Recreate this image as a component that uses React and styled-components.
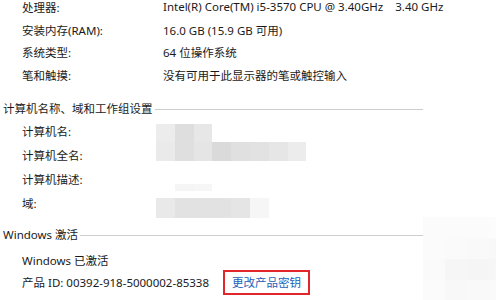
import React from 'react'
import styled, { createGlobalStyle } from 'styled-components'

const GlobalStyle = createGlobalStyle`
  html, body {
    margin: 0;
    padding: 0;
    background: #fff;
  }
  body {
    font-family: "Noto Sans", "Noto Sans CJK SC", sans-serif;
    font-size: 11.5px;
    color: #1a1a1a;
  }
`

const Page = styled.div`
  width: 496px;
  height: 300px;
  overflow: hidden;
  position: relative;
  background: #fff;
`

const Section = styled.div`
  display: flex;
  flex-direction: column;
  margin-top: ${p => p.top || 0}px;
`

const Header = styled.div`
  display: flex;
  align-items: center;
  height: 22px;
  width: 423px;
  padding-left: 3px;
  box-sizing: border-box;
  white-space: nowrap;

  &::after {
    content: '';
    flex: 1;
    height: 1px;
    margin: 2px 0 0 2px;
    background: #cdcdcd;
  }
`

const Row = styled.div`
  display: flex;
  align-items: center;
  height: ${p => p.h}px;
  padding-left: 22px;
  white-space: nowrap;
`

const Label = styled.div`
  width: 141px;
  flex-shrink: 0;
`

const Value = styled.div`
  position: relative;
  display: flex;
  align-items: center;
  align-self: stretch;
  flex: 1;
`

const Gap = styled.span`
  display: inline-block;
  width: ${p => p.w}px;
`

const Mosaic = styled.div`
  position: absolute;
  left: -7px;
  top: ${p => p.top}px;
  display: flex;
`

const Cell = styled.div`
  width: 18.8px;
  height: ${p => p.h}px;
  background: ${p => p.c};
`

const KeyLink = styled.a`
  margin-left: 14px;
  padding: 1px 7px;
  border: 2px solid #e2252b;
  color: #1a5fb8;
  text-decoration: none;
  line-height: 19px;
  cursor: pointer;
`

const Corner = styled.div`
  position: absolute;
  left: 423px;
  top: 217px;
  display: grid;
  grid-template-columns: repeat(4, 22px);
  grid-auto-rows: 21px;
`

const CornerCell = styled.div`
  background: ${p => p.c};
`

const shades = (list, h) => list.map((c, i) => <Cell key={i} h={h} c={c} />)

const cornerShades = [
  '#fbfbfb', '#fbfbfb', '#fbfbfb', '#fcfcfc',
  '#fbfbfb', '#fafafa', '#f9f9f9', '#f8f8f8',
  '#fafafa', '#f6f6f6', '#f5f5f5', '#f6f6f6',
  '#fbfbfb', '#f8f8f8', '#f9f9f9', '#fafafa'
]

const App = () => (
  <Page>
    <GlobalStyle />
    <Section top={-4.5}>
      <Row h={22.7}>
        <Label>处理器:</Label>
        <Value>
          Intel(R) Core(TM) i5-3570 CPU @ 3.40GHz<Gap w={12} />3.40 GHz
        </Value>
      </Row>
      <Row h={22.7}>
        <Label>安装内存(RAM):</Label>
        <Value>16.0 GB (15.9 GB 可用)</Value>
      </Row>
      <Row h={22.7}>
        <Label>系统类型:</Label>
        <Value>64 位操作系统</Value>
      </Row>
      <Row h={22.7}>
        <Label>笔和触摸:</Label>
        <Value>没有可用于此显示器的笔或触控输入</Value>
      </Row>
    </Section>

    <Section top={11}>
      <Header>计算机名称、域和工作组设置</Header>
      <Row h={24}>
        <Label>计算机名:</Label>
        <Value>
          <Mosaic top={5}>{shades(['#ececec', '#dedede', '#e7e7e7'], 18)}</Mosaic>
        </Value>
      </Row>
      <Row h={24}>
        <Label>计算机全名:</Label>
        <Value>
          <Mosaic top={-1}>
            {shades(['#eaeaea', '#dfdfdf', '#e5e5e5', '#dadada', '#e0e0e0', '#e2e2e2', '#e6e6e6', '#ececec'], 19)}
          </Mosaic>
        </Value>
      </Row>
      <Row h={24}>
        <Label>计算机描述:</Label>
        <Value>
          <Mosaic top={17}>{shades(['#ffffff', '#f5f5f5', '#f6f6f6'], 7)}</Mosaic>
        </Value>
      </Row>
      <Row h={24}>
        <Label>域:</Label>
        <Value>
          <Mosaic top={7}>
            {shades(['#e9e9e9', '#e2e2e2', '#e2e2e2', '#e2e2e2', '#e5e5e5', '#f6f6f6'], 20)}
          </Mosaic>
        </Value>
      </Row>
    </Section>

    <Section top={8}>
      <Header>Windows 激活</Header>
      <Section top={4}>
        <Row h={22}>
          <Label>Windows 已激活</Label>
        </Row>
        <Row h={22}>
          <Value>
            产品 ID: 00392-918-5000002-85338
            <KeyLink>更改产品密钥</KeyLink>
          </Value>
        </Row>
      </Section>
    </Section>

    <Corner>
      {cornerShades.map((c, i) => <CornerCell key={i} c={c} />)}
    </Corner>
  </Page>
)

export default App
